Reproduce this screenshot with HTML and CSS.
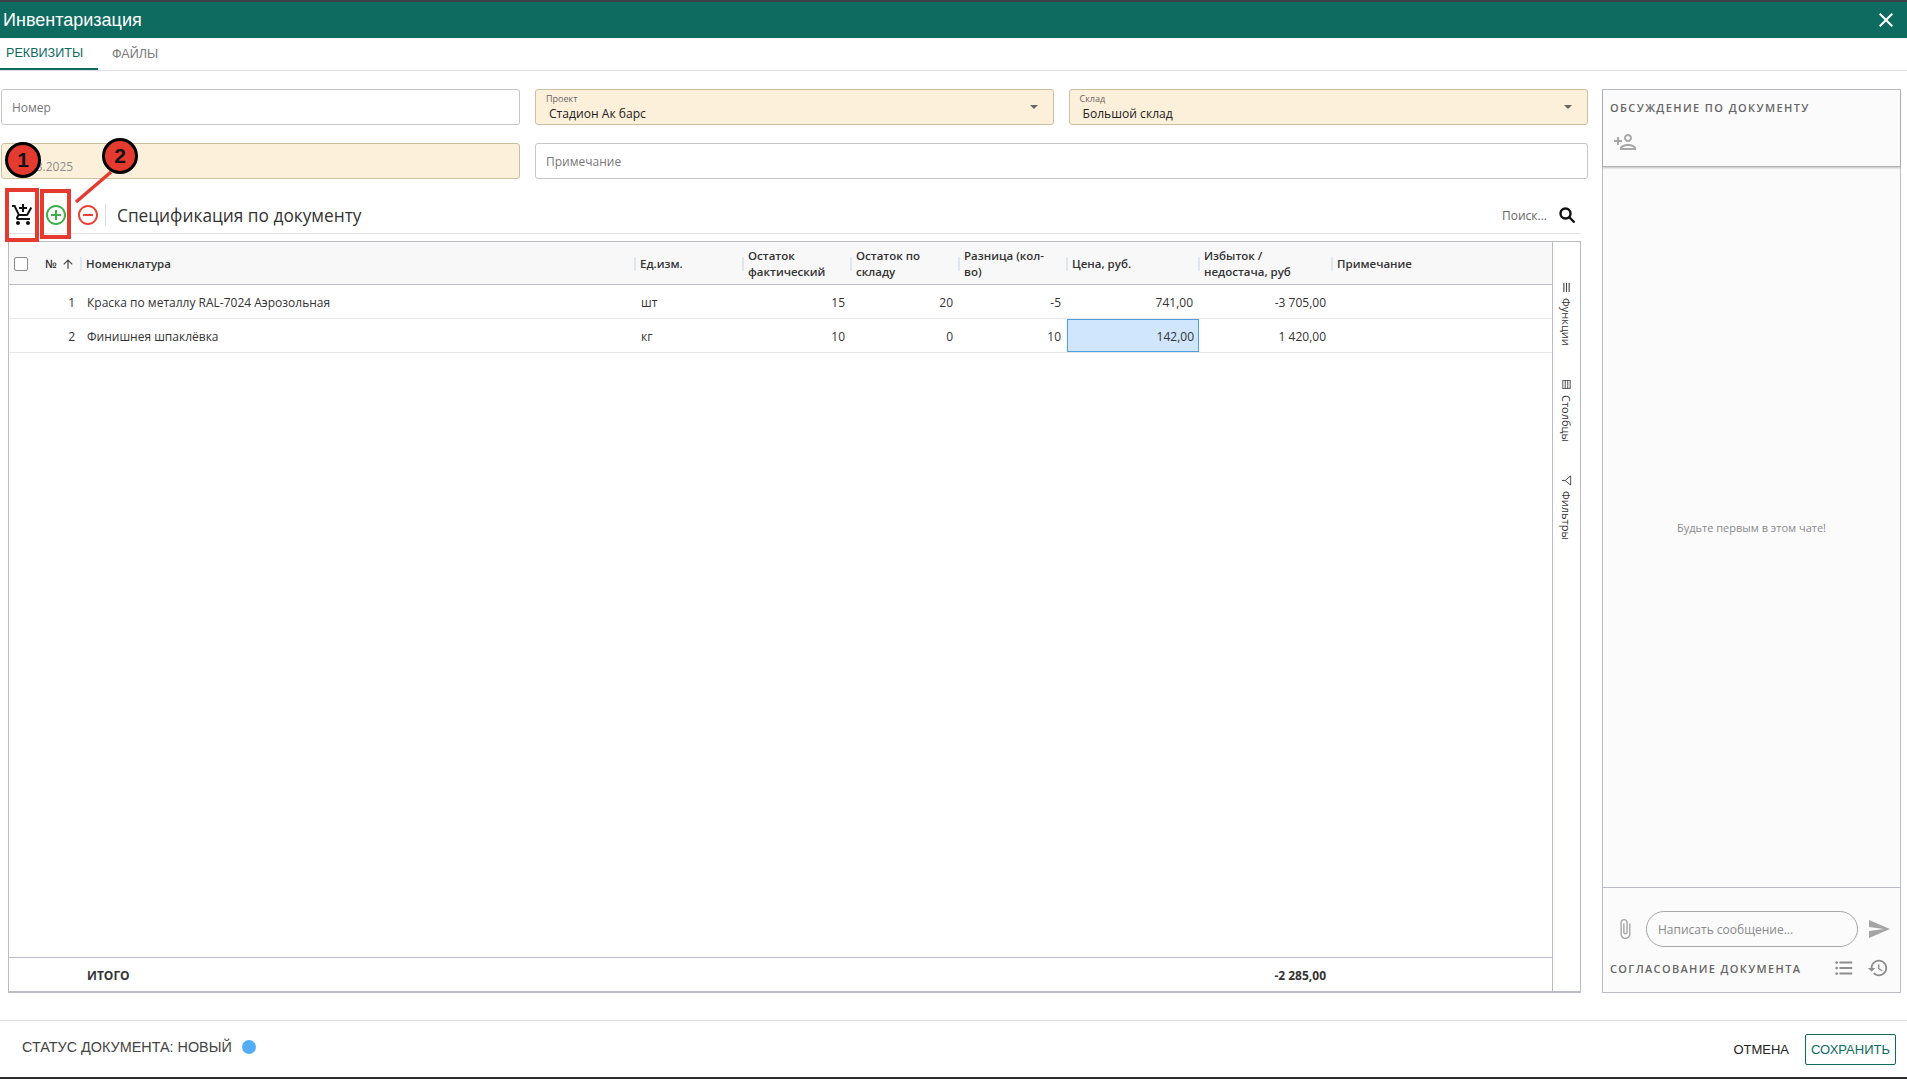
FILE: index.html
```html
<!DOCTYPE html>
<html lang="ru">

<head>
    <meta charset="UTF-8">
    <meta name="viewport" content="width=device-width, initial-scale=1.0">
    <title>Инвентаризация</title>
    <link rel="stylesheet" href="styles.css">
</head>

<body>
    <!-- Header -->
    <header class="header">
        <span class="header-title">Инвентаризация</span>
        <svg class="header-close" viewBox="0 0 24 24"><path d="M19 6.41L17.59 5 12 10.59 6.41 5 5 6.41 10.59 12 5 17.59 6.41 19 12 13.41 17.59 19 19 17.59 13.41 12z"/></svg>
    </header>

    <!-- Tabs -->
    <nav class="tabs">
        <a class="tab tab-active">РЕКВИЗИТЫ</a>
        <a class="tab">ФАЙЛЫ</a>
    </nav>

    <main class="main">
        <section class="doc">
            <div class="fields">
                <div class="field"><span class="placeholder">Номер</span></div>
                <div class="field field-req field-select">
                    <div>
                        <div class="field-label">Проект</div>
                        <div class="field-value">Стадион Ак барс</div>
                    </div>
                    <span class="caret"></span>
                </div>
                <div class="field field-req field-select">
                    <div>
                        <div class="field-label">Склад</div>
                        <div class="field-value">Большой склад</div>
                    </div>
                    <span class="caret"></span>
                </div>
                <div class="field field-req"><span class="date-value">03.03.2025</span></div>
                <div class="field field-wide"><span class="placeholder">Примечание</span></div>
            </div>

            <!-- Toolbar -->
            <div class="toolbar">
                <svg class="tool tool-cart" viewBox="0 0 24 24"><path d="M11 9h2V6h3V4h-3V1h-2v3H8v2h3v3zm-4 9c-1.1 0-1.99.9-1.99 2S5.9 22 7 22s2-.9 2-2-.9-2-2-2zm10 0c-1.1 0-1.99.9-1.99 2s.89 2 1.99 2 2-.9 2-2-.9-2-2-2zm-9.83-3.25l.03-.12.9-1.63h7.45c.75 0 1.41-.41 1.75-1.03l3.86-7.01L19.42 4h-.01l-1.1 2-2.76 5H8.53l-.13-.27L6.16 6l-.95-2-.94-2H1v2h2l3.6 7.59-1.35 2.45c-.16.28-.25.61-.25.96 0 1.1.9 2 2 2h12v-2H7.42c-.13 0-.25-.11-.25-.25z"/></svg>
                <svg class="tool tool-add" viewBox="0 0 24 24"><path d="M13 7h-2v4H7v2h4v4h2v-4h4v-2h-4V7zm-1-5C6.48 2 2 6.48 2 12s4.48 10 10 10 10-4.48 10-10S17.52 2 12 2zm0 18c-4.41 0-8-3.59-8-8s3.59-8 8-8 8 3.59 8 8-3.59 8-8 8z"/></svg>
                <svg class="tool tool-remove" viewBox="0 0 24 24"><path d="M7 11v2h10v-2H7zm5-9C6.48 2 2 6.48 2 12s4.48 10 10 10 10-4.48 10-10S17.52 2 12 2zm0 18c-4.41 0-8-3.59-8-8s3.59-8 8-8 8 3.59 8 8-3.59 8-8 8z"/></svg>
                <span class="tool-sep"></span>
                <span class="toolbar-title">Спецификация по документу</span>
                <span class="search-text">Поиск...</span>
                <svg class="tool-search" viewBox="0 0 18 18"><circle cx="7.500" cy="7.500" r="5"/><line x1="11" y1="11" x2="16.500" y2="16.500"/></svg>
            </div>

            <!-- Grid -->
            <div class="grid">
                <div class="grid-table">
                    <div class="row row-head">
                        <div class="cell-first">
                            <span class="checkbox"></span>
                            <span>№</span>
                            <svg class="sort-arrow" viewBox="0 0 24 24"><path d="M4 12l1.41 1.41L11 7.83V20h2V7.83l5.58 5.59L20 12l-8-8-8 8z"/></svg>
                        </div>
                        <div class="head-cell">Номенклатура</div>
                        <div class="head-cell">Ед.изм.</div>
                        <div class="head-cell">Остаток фактический</div>
                        <div class="head-cell">Остаток по складу</div>
                        <div class="head-cell"><span>Разница (кол-<br>во)</span></div>
                        <div class="head-cell">Цена, руб.</div>
                        <div class="head-cell"><span>Избыток /<br>недостача, руб</span></div>
                        <div class="head-cell">Примечание</div>
                    </div>
                    <div class="row row-body">
                        <div class="num">1</div>
                        <div class="text">Краска по металлу RAL-7024 Аэрозольная</div>
                        <div class="text">шт</div>
                        <div class="num">15</div>
                        <div class="num">20</div>
                        <div class="num">-5</div>
                        <div class="num">741,00</div>
                        <div class="num">-3 705,00</div>
                        <div></div>
                    </div>
                    <div class="row row-body">
                        <div class="num">2</div>
                        <div class="text">Финишнея шпаклёвка</div>
                        <div class="text">кг</div>
                        <div class="num">10</div>
                        <div class="num">0</div>
                        <div class="num">10</div>
                        <div class="num cell-selected">142,00</div>
                        <div class="num">1 420,00</div>
                        <div></div>
                    </div>
                    <div class="grid-spacer"></div>
                    <div class="row row-total">
                        <div></div>
                        <div class="text">ИТОГО</div>
                        <div></div>
                        <div></div>
                        <div></div>
                        <div></div>
                        <div></div>
                        <div class="num">-2 285,00</div>
                        <div></div>
                    </div>
                </div>
                <aside class="side-tabs">
                    <div class="side-tab">
                        <svg class="side-icon" viewBox="0 0 12 12"><path d="M1 2.500h10v1.200H1zM1 5.400h10v1.200H1zM1 8.300h10v1.200H1z"/></svg>
                        <span>Функции</span>
                    </div>
                    <div class="side-tab">
                        <svg class="side-icon" viewBox="0 0 12 12"><path d="M1 1.500h10v9H1zm1 1v1.600h8V2.500zm0 2.600v1.800h8V5.100zm0 2.800v1.600h8V7.900z" fill-rule="evenodd"/></svg>
                        <span>Столбцы</span>
                    </div>
                    <div class="side-tab">
                        <svg class="side-icon side-icon-line" viewBox="0 0 12 12"><path d="M1 1.500h10L6 7.500z M6 7.500V11"/></svg>
                        <span>Фильтры</span>
                    </div>
                </aside>
            </div>
        </section>

        <!-- Discussion -->
        <aside class="chat">
            <div class="chat-head">
                <div class="chat-title">ОБСУЖДЕНИЕ ПО ДОКУМЕНТУ</div>
                <svg class="chat-person" viewBox="0 0 24 24"><path d="M15 12c2.210 0 4-1.790 4-4s-1.790-4-4-4-4 1.790-4 4 1.790 4 4 4zm0-6c1.100 0 2 .9 2 2s-.9 2-2 2-2-.9-2-2 .9-2 2-2zm0 8c-2.670 0-8 1.340-8 4v2h16v-2c0-2.660-5.330-4-8-4zm-6 4c.22-.72 3.310-2 6-2 2.700 0 5.800 1.290 6 2H9zm-3-3v-3h3v-2H6V7H4v3H1v2h3v3h2z"/></svg>
            </div>
            <div class="chat-body">Будьте первым в этом чате!</div>
            <div class="chat-foot">
                <div class="chat-input-row">
                    <svg class="chat-clip" viewBox="0 0 24 24"><path d="M16.500 6v11.500c0 2.210-1.790 4-4 4s-4-1.790-4-4V5c0-1.380 1.120-2.500 2.500-2.500s2.500 1.120 2.500 2.500v10.500c0 .55-.45 1-1 1s-1-.45-1-1V6H10v9.500c0 1.380 1.120 2.500 2.500 2.500s2.500-1.120 2.500-2.500V5c0-2.210-1.790-4-4-4S7 2.790 7 5v12.500c0 3.040 2.460 5.500 5.500 5.500s5.500-2.460 5.500-5.500V6h-1.500z"/></svg>
                    <div class="chat-input">Написать сообщение...</div>
                    <svg class="chat-send" viewBox="0 0 24 24"><path d="M2.010 21L23 12 2.010 3 2 10l15 2-15 2z"/></svg>
                </div>
                <div class="approval">
                    <span class="approval-title">СОГЛАСОВАНИЕ ДОКУМЕНТА</span>
                    <svg class="approval-icon" viewBox="0 0 24 24"><path d="M4 10.500c-.83 0-1.500.67-1.500 1.500s.67 1.500 1.500 1.500 1.500-.67 1.500-1.500-.67-1.500-1.500-1.500zm0-6c-.83 0-1.500.67-1.500 1.500S3.170 7.500 4 7.500 5.500 6.830 5.500 6 4.830 4.500 4 4.500zm0 12c-.83 0-1.500.68-1.500 1.500s.68 1.500 1.500 1.500 1.500-.68 1.500-1.500-.67-1.500-1.500-1.500zM7 19h14v-2H7v2zm0-6h14v-2H7v2zm0-8v2h14V5H7z"/></svg>
                    <svg class="approval-icon" viewBox="0 0 24 24"><path d="M13 3c-4.970 0-9 4.030-9 9H1l3.890 3.890.07.14L9 12H6c0-3.870 3.130-7 7-7s7 3.130 7 7-3.130 7-7 7c-1.930 0-3.680-.79-4.940-2.060l-1.420 1.420C8.270 19.990 10.510 21 13 21c4.970 0 9-4.030 9-9s-4.030-9-9-9zm-1 5v5l4.280 2.540.72-1.210-3.500-2.080V8H12z"/></svg>
                </div>
            </div>
        </aside>
    </main>

    <!-- Footer -->
    <footer class="footer">
        <span class="status">СТАТУС ДОКУМЕНТА: НОВЫЙ</span>
        <span class="status-dot"></span>
        <span class="btn-cancel">ОТМЕНА</span>
        <span class="btn-save">СОХРАНИТЬ</span>
    </footer>

    <!-- Annotations drawn over the screenshot -->
    <div class="mark-box mark-box-1"></div>
    <div class="mark-box mark-box-2"></div>
    <svg class="mark-line" viewBox="0 0 40 34"><line x1="37" y1="2" x2="2" y2="32"/></svg>
    <div class="mark-num mark-num-1">1</div>
    <div class="mark-num mark-num-2">2</div>
</body>

</html>
```

FILE: styles.css
```css
/* Base styles */
* {
    box-sizing: border-box;
}

body {
    position: relative;
    display: flex;
    flex-direction: column;
    height: 100vh;
    margin: 0;
    overflow: hidden;
    border-top: 2px solid #3b4146;
    border-bottom: 2px solid #2b2b2b;
    font-family: "Open Sans", Arial, sans-serif;
    font-size: 12px;
    color: #333;
    background-color: #fff;
}

svg {
    display: block;
    flex-shrink: 0;
}

/* Header */
.header {
    display: flex;
    align-items: center;
    justify-content: space-between;
    flex-shrink: 0;
    height: 36px;
    padding: 0 9px 0 3px;
    background-color: #0d6b5f;
    color: #fff;
}

.header-title {
    font-family: "Liberation Sans", Arial, sans-serif;
    font-size: 18px;
}

.header-close {
    width: 24px;
    height: 24px;
    fill: #fff;
}

/* Tabs */
.tabs {
    display: flex;
    flex-shrink: 0;
    height: 33px;
    border-bottom: 1px solid #dfe1e4;
    font-family: "Liberation Sans", Arial, sans-serif;
    font-size: 12.600px;
}

.tab {
    display: flex;
    align-items: center;
    height: 32px;
    padding: 0 14px 0 6px;
    color: #7a7a7a;
}

.tab-active {
    width: 98px;
    padding-right: 0;
    border-bottom: 2px solid #0d6b5f;
    color: #0d6b5f;
}

.tab + .tab {
    padding-left: 14px;
}

/* Main area */
.main {
    display: flex;
    flex: 1;
    min-height: 0;
    padding: 18px 6px 27px 1px;
    gap: 14px;
}

.doc {
    display: flex;
    flex-direction: column;
    width: 1587px;
}

/* Form fields */
.fields {
    display: grid;
    grid-template-columns: 519px 518.500px 519px;
    grid-auto-rows: 36px;
    gap: 18px 15px;
}

.field {
    display: flex;
    align-items: center;
    padding: 0 10px;
    border: 1px solid #c4c6c9;
    border-radius: 3px;
    background-color: #fff;
}

.field-wide {
    grid-column: 2 / 4;
}

.field-req {
    border-color: #cdbf9f;
    background-color: #fdf0da;
}

.field-select {
    justify-content: space-between;
    padding: 0 15px 0 10px;
}

.placeholder {
    color: #777;
    font-size: 12px;
}

.date-value {
    padding-top: 11px;
    color: #8c8c8c;
    font-size: 12px;
}

.field-label {
    color: #666;
    font-size: 9px;
    line-height: 12px;
}

.field-value {
    padding-left: 3px;
    color: #222;
    font-size: 12.100px;
    line-height: 17px;
}

.caret {
    width: 0;
    height: 0;
    border-top: 4px solid #666;
    border-left: 4px solid transparent;
    border-right: 4px solid transparent;
}

/* Toolbar */
.toolbar {
    display: flex;
    align-items: center;
    flex-shrink: 0;
    height: 44px;
    margin: 11px 7px 7px 7px;
    padding-top: 6px;
    border-bottom: 1px solid #e3e4e6;
}

.tool {
    width: 24px;
    height: 24px;
}

.tool-cart {
    margin-left: 3px;
    fill: #111;
}

.tool-add {
    margin-left: 9px;
    fill: #3fae49;
}

.tool-remove {
    margin-left: 8px;
    fill: #ea4335;
}

.tool-sep {
    width: 1px;
    height: 22px;
    margin: 0 11px 0 5px;
    background-color: #dcdcdc;
}

.toolbar-title {
    flex: 1;
    margin-top: 2px;
    font-size: 17.300px;
    color: #333;
}

.search-text {
    margin-top: 2px;
    margin-right: 11px;
    font-size: 12px;
    color: #666;
}

.tool-search {
    width: 18px;
    height: 18px;
    margin-right: 5px;
    fill: none;
    stroke: #111;
    stroke-width: 2.400;
}

/* Grid */
.grid {
    display: flex;
    flex: 1;
    min-height: 0;
    margin: 0 7px;
    border: 1px solid #b9bcc7;
    border-bottom-width: 2px;
}

.grid-table {
    display: flex;
    flex-direction: column;
    flex: 1;
    min-width: 0;
}

.row {
    display: grid;
    grid-template-columns: 71px 554px 108px 108px 108px 108px 132px 133px 1fr;
    align-items: center;
}

.row-head {
    height: 43px;
    padding-top: 2px;
    border-bottom: 1px solid #b9bcc7;
    background-color: #f8f8f9;
    font-size: 11.500px;
    font-weight: 600;
    line-height: 16px;
    color: #333;
}

.cell-first {
    display: flex;
    align-items: center;
    padding-left: 5px;
}

.checkbox {
    width: 14px;
    height: 14px;
    margin-right: 17px;
    border: 1.500px solid #8a8a8a;
    border-radius: 2px;
    background-color: #fff;
}

.sort-arrow {
    width: 14px;
    height: 14px;
    margin-left: 4px;
    fill: #444;
}

.head-cell {
    display: flex;
    align-items: center;
}

.head-cell::before {
    content: "";
    flex-shrink: 0;
    width: 2px;
    height: 14px;
    margin-right: 4px;
    background-color: #e2e7ee;
}

.row-body {
    height: 34px;
    border-bottom: 1px solid #e6e8ee;
}

.row-body > div {
    height: 33px;
    line-height: 35px;
}

.text {
    padding-left: 7px;
    white-space: nowrap;
}

.num {
    padding-right: 5px;
    text-align: right;
}

.row-body > .cell-selected {
    margin: 0 -1px 0 1px;
    padding-right: 4px;
    border: 1px solid #4c9fe0;
    background-color: #cfe6fc;
    line-height: 33px;
}

.grid-spacer {
    flex: 1;
}

.row-total {
    height: 34px;
    padding-top: 2px;
    border-top: 1px solid #b9bcc7;
    font-weight: 700;
}

/* Vertical tabs beside the grid */
.side-tabs {
    display: flex;
    flex-direction: column;
    align-items: center;
    width: 28px;
    padding-top: 40px;
    gap: 33px;
    border-left: 1px solid #b9bcc7;
    font-size: 11px;
    color: #333;
}

.side-tab {
    display: flex;
    align-items: center;
    gap: 5px;
    writing-mode: vertical-rl;
}

.side-icon {
    width: 11px;
    height: 11px;
    transform: rotate(90deg);
    fill: #444;
}

.side-icon-line {
    fill: none;
    stroke: #444;
}

/* Discussion panel */
.chat {
    display: flex;
    flex-direction: column;
    width: 299px;
    border: 1px solid #b9bcc7;
    background-color: #fbfbfb;
}

.chat-head {
    height: 77px;
    padding: 10px 7px 0;
    border-bottom: 1px solid #b5b5b5;
    box-shadow: 0 1px 2px rgba(0, 0, 0, 0.25);
}

.chat-title {
    font-size: 11px;
    font-weight: 600;
    letter-spacing: 1.400px;
    line-height: 16px;
    color: #666;
}

.chat-person {
    width: 24px;
    height: 24px;
    margin: 14px 0 0 3px;
    fill: #a8a8a8;
}

.chat-body {
    display: flex;
    align-items: center;
    justify-content: center;
    flex: 1;
    font-size: 11px;
    color: #8a8a8a;
}

.chat-foot {
    height: 105px;
    padding: 23px 7px 0;
    border-top: 1px solid #b9bcc7;
}

.chat-input-row {
    display: flex;
    align-items: center;
    height: 36px;
}

.chat-clip {
    width: 22px;
    height: 22px;
    margin-left: 4px;
    fill: #a5a5a5;
}

.chat-input {
    display: flex;
    align-items: center;
    width: 212px;
    height: 36px;
    margin-left: 10px;
    padding-left: 11px;
    border: 1px solid #a8a8a8;
    border-radius: 18px;
    font-size: 12px;
    color: #8a8a8a;
}

.chat-send {
    width: 24px;
    height: 24px;
    margin-left: 9px;
    fill: #a5a5a5;
}

.approval {
    display: flex;
    align-items: center;
    gap: 12px;
    margin-top: 10px;
    padding-right: 4px;
}

.approval-title {
    flex: 1;
    font-size: 11px;
    font-weight: 600;
    letter-spacing: 1.350px;
    color: #666;
    white-space: nowrap;
}

.approval-icon {
    width: 22px;
    height: 22px;
    fill: #8d8d8d;
}

/* Footer */
.footer {
    display: flex;
    align-items: center;
    flex-shrink: 0;
    height: 57px;
    padding: 0 11px 0 22px;
    border-top: 1px solid #dfe1e4;
    font-family: "Liberation Sans", Arial, sans-serif;
    font-size: 13px;
}

.status {
    margin-bottom: 4px;
    font-size: 14.400px;
    color: #444;
}

.status-dot {
    width: 14px;
    height: 14px;
    margin: 0 0 4px 10px;
    border-radius: 50%;
    background-color: #55aef5;
}

.btn-cancel {
    margin-left: auto;
    color: #222;
}

.btn-save {
    display: flex;
    align-items: center;
    justify-content: center;
    width: 91px;
    height: 31px;
    margin-left: 16px;
    border: 1px solid #0d6b5f;
    border-radius: 2px;
    color: #0d6b5f;
}

/* Annotations */
.mark-box {
    position: absolute;
    border: 4px solid #e53a30;
}

.mark-box-1 {
    left: 5px;
    top: 186px;
    width: 34px;
    height: 54px;
}

.mark-box-2 {
    left: 40px;
    top: 187px;
    width: 31px;
    height: 50px;
}

.mark-line {
    position: absolute;
    left: 74px;
    top: 168px;
    width: 40px;
    height: 34px;
    stroke: #e53a30;
    stroke-width: 3.500;
}

.mark-num {
    position: absolute;
    display: flex;
    align-items: center;
    justify-content: center;
    width: 36px;
    height: 36px;
    border: 3px solid #000;
    border-radius: 50%;
    background-color: #e53a30;
    font-family: "Liberation Sans", Arial, sans-serif;
    font-size: 21px;
    font-weight: 700;
    color: #111;
}

.mark-num-1 {
    left: 5px;
    top: 140px;
}

.mark-num-2 {
    left: 102px;
    top: 136px;
}
```
